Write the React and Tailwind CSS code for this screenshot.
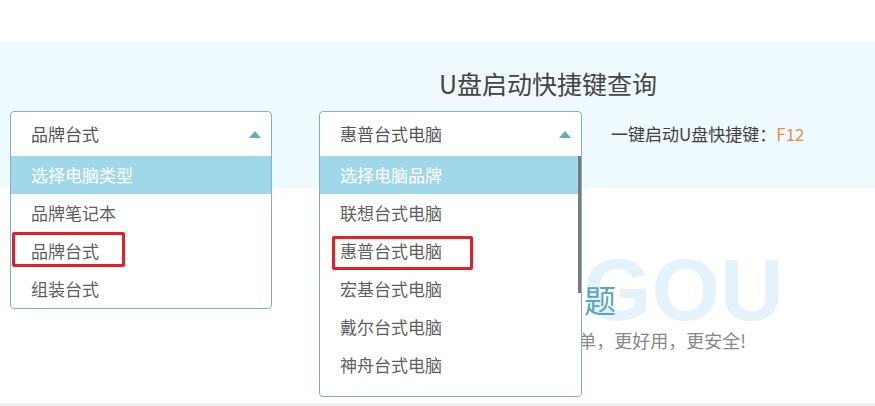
const font = { fontFamily: '"Noto Sans CJK SC", "Liberation Sans", sans-serif' };

const typeOptions = ["选择电脑类型", "品牌笔记本", "品牌台式", "组装台式"];
const brandOptions = [
  "选择电脑品牌",
  "联想台式电脑",
  "惠普台式电脑",
  "宏基台式电脑",
  "戴尔台式电脑",
  "神舟台式电脑",
];

function Caret() {
  return (
    <span className="h-0 w-0 border-x-[6px] border-b-[7px] border-x-transparent border-b-[#68a9bd]" />
  );
}

function OpenSelect({ value, options, width, scroll, marker }) {
  return (
    <div className="relative h-[45px] shrink-0" style={{ width }}>
      <div className="absolute left-0 top-0 z-10 w-full overflow-hidden rounded-[4px] border border-[#7eb3c4] bg-white">
        <div className="flex h-[44px] items-center justify-between pl-[20px] pr-[10px] text-[17px] text-[#555]">
          <span>{value}</span>
          <Caret />
        </div>
        <div className={scroll ? "flex h-[240px]" : "flex"}>
          <ul className="flex-1">
            {options.map((opt, i) => (
              <li
                key={opt}
                className={
                  i === 0
                    ? "flex h-[38px] items-center bg-[#a0d8ea] pl-[20px] text-[17px] text-white"
                    : "flex h-[38px] items-center pl-[20px] text-[17px] text-[#5e5e5e]"
                }
              >
                {opt}
              </li>
            ))}
          </ul>
          {scroll && (
            <div className="w-[3px]">
              <div className="h-[137px] bg-[#7a7a7a]" />
            </div>
          )}
        </div>
      </div>
      {marker && (
        <div
          className="absolute z-20 rounded-[2px] border-[3px] border-[#e2202b]"
          style={marker}
        />
      )}
    </div>
  );
}

export default function App() {
  return (
    <div className="h-[406px] w-[875px] overflow-hidden bg-white" style={font}>
      <div className="h-[42px]" />

      <div className="flex h-[146px] bg-[#eefafd] pl-[10px] pt-[25px]">
        <div className="pt-[44px]">
          <OpenSelect
            value="品牌台式"
            options={typeOptions}
            width={262}
            marker={{ left: 2, top: 121, width: 113, height: 35 }}
          />
        </div>
        <div className="ml-[47px] w-[458px] shrink-0">
          <h2 className="h-[32px] text-center text-[25px] leading-[32px] text-[#444]">
            U盘启动快捷键查询
          </h2>
          <div className="mt-[12px] flex">
            <OpenSelect
              value="惠普台式电脑"
              options={brandOptions}
              width={263}
              scroll
              marker={{ left: 13, top: 125, width: 141, height: 34 }}
            />
            <div className="ml-[29px] flex h-[45px] shrink-0 items-center whitespace-nowrap text-[17px] text-[#3f3f3f]">
              一键启动U盘快捷键：<span className="text-[#f0884a]">F12</span>
            </div>
          </div>
        </div>
      </div>

      <div className="relative h-[215px] pt-[91px]">
        <div
          className="absolute left-[583px] top-[58px] text-[88px] font-bold leading-none text-[#e4f3f9]"
          style={{ fontFamily: '"Liberation Sans", sans-serif' }}
        >
          GOU
        </div>
        <h3 className="relative w-[616px] text-right text-[32px] leading-[40px] text-[#5ba6bf]">
          U盘启动问题
        </h3>
        <p className="relative mt-[9px] w-[746px] text-right text-[18px] leading-[24px] text-[#888]">
          装机更简单，更好用，更安全!
        </p>
      </div>

      <div className="h-[3px] bg-[#efefef]" />
    </div>
  );
}
